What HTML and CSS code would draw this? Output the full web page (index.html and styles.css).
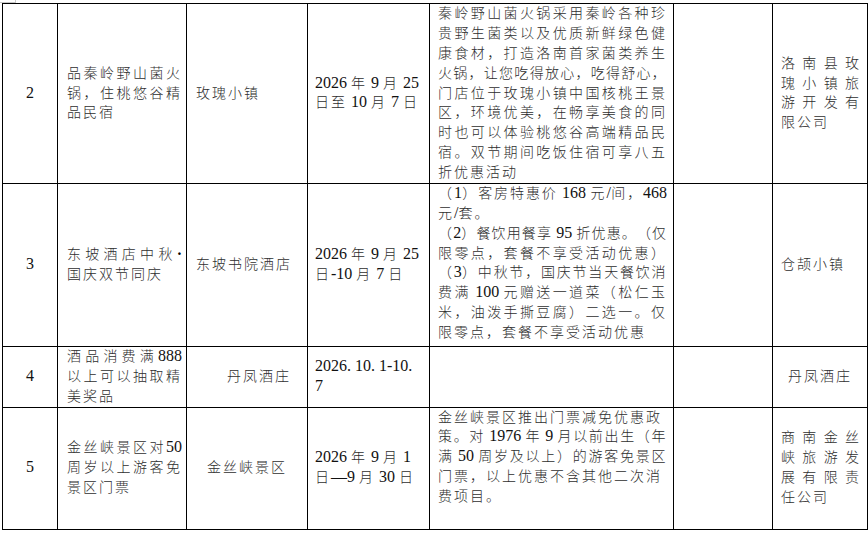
FILE: index.html
```html
<!DOCTYPE html>
<html lang="zh-CN">
<head>
<meta charset="utf-8">
<title>活动表</title>
<link rel="stylesheet" href="styles.css">
</head>
<body>
<div class="corner"></div>
<div class="sheet">
<table class="grid">
  <colgroup>
    <col class="w1"><col class="w2"><col class="w3"><col class="w4"><col class="w5"><col class="w6"><col class="w7">
  </colgroup>
  <tr class="r2">
    <td class="num"><span class="n">2</span></td>
    <td class="name">
      <span class="ln j">品秦岭野山菌火</span>
      <span class="ln j">锅，住桃悠谷精</span>
      <span class="ln">品民宿</span>
    </td>
    <td class="place">玫瑰小镇</td>
    <td class="date">
      <span class="ln"><span class="n">2026 </span>年<span class="n"> 9 </span>月<span class="n"> 25</span></span>
      <span class="ln">日至<span class="n"> 10 </span>月<span class="n"> 7 </span>日</span>
    </td>
    <td class="desc">
      <span class="ln j">秦岭野山菌火锅采用秦岭各种珍</span>
      <span class="ln j">贵野生菌类以及优质新鲜绿色健</span>
      <span class="ln j">康食材，打造洛南首家菌类养生</span>
      <span class="ln j t2">火锅，让您吃得放心，吃得舒心，</span>
      <span class="ln j">门店位于玫瑰小镇中国核桃王景</span>
      <span class="ln j">区，环境优美，在畅享美食的同</span>
      <span class="ln j">时也可以体验桃悠谷高端精品民</span>
      <span class="ln j">宿。双节期间吃饭住宿可享八五</span>
      <span class="ln">折优惠活动</span>
    </td>
    <td class="empty"></td>
    <td class="org">
      <span class="ln j">洛南县玫</span>
      <span class="ln j">瑰小镇旅</span>
      <span class="ln j">游开发有</span>
      <span class="ln">限公司</span>
    </td>
  </tr>
  <tr class="r3">
    <td class="num"><span class="n">3</span></td>
    <td class="name">
      <span class="ln j">东坡酒店中秋<span class="n dot">·</span></span>
      <span class="ln">国庆双节同庆</span>
    </td>
    <td class="place">东坡书院酒店</td>
    <td class="date">
      <span class="ln"><span class="n">2026 </span>年<span class="n"> 9 </span>月<span class="n"> 25</span></span>
      <span class="ln">日<span class="n">-10 </span>月<span class="n"> 7 </span>日</span>
    </td>
    <td class="desc">
      <span class="ln j t1">（<span class="n">1</span>）客房特惠价<span class="n"> 168 </span>元<span class="n">/</span>间，<span class="n">468</span></span>
      <span class="ln">元<span class="n">/</span>套。</span>
      <span class="ln j t3">（<span class="n">2</span>）餐饮用餐享<span class="n"> 95 </span>折优惠。（仅</span>
      <span class="ln j">限零点，套餐不享受活动优惠）</span>
      <span class="ln j t1">（<span class="n">3</span>）中秋节，国庆节当天餐饮消</span>
      <span class="ln j">费满<span class="n"> 100 </span>元赠送一道菜（松仁玉</span>
      <span class="ln j">米，油泼手撕豆腐）二选一。仅</span>
      <span class="ln">限零点，套餐不享受活动优惠</span>
    </td>
    <td class="empty"></td>
    <td class="org">仓颉小镇</td>
  </tr>
  <tr class="r4">
    <td class="num"><span class="n">4</span></td>
    <td class="name">
      <span class="ln j">酒品消费满<span class="n">888</span></span>
      <span class="ln j">以上可以抽取精</span>
      <span class="ln">美奖品</span>
    </td>
    <td class="place place-right">丹凤酒庄</td>
    <td class="date">
      <span class="ln"><span class="n">2026. 10. 1-10.</span></span>
      <span class="ln"><span class="n">7</span></span>
    </td>
    <td class="desc"></td>
    <td class="empty"></td>
    <td class="org org-center">丹凤酒庄</td>
  </tr>
  <tr class="r5">
    <td class="num"><span class="n">5</span></td>
    <td class="name">
      <span class="ln j">金丝峡景区对<span class="n">50</span></span>
      <span class="ln j">周岁以上游客免</span>
      <span class="ln">景区门票</span>
    </td>
    <td class="place place-center">金丝峡景区</td>
    <td class="date">
      <span class="ln"><span class="n">2026 </span>年<span class="n"> 9 </span>月<span class="n"> 1</span></span>
      <span class="ln">日<span class="n">—9 </span>月<span class="n"> 30 </span>日</span>
    </td>
    <td class="desc">
      <span class="ln">金丝峡景区推出门票减免优惠政</span>
      <span class="ln j t1">策。对<span class="n"> 1976 </span>年<span class="n"> 9 </span>月以前出生（年</span>
      <span class="ln j t1">满<span class="n"> 50 </span>周岁及以上）的游客免景区</span>
      <span class="ln">门票，以上优惠不含其他二次消</span>
      <span class="ln">费项目。</span>
    </td>
    <td class="empty"></td>
    <td class="org">
      <span class="ln j">商南金丝</span>
      <span class="ln j">峡旅游发</span>
      <span class="ln j">展有限责</span>
      <span class="ln">任公司</span>
    </td>
  </tr>
</table>
</div>
</body>
</html>
```

FILE: styles.css
```css
html, body {
  margin: 0;
  padding: 0;
  background: #ffffff;
}

.corner {
  position: absolute;
  left: 0;
  top: 0;
  width: 15px;
  height: 2px;
  border-right: 1px solid #c8c8c8;
  border-bottom: 1px solid #c8c8c8;
}

.sheet {
  padding: 3px 0 0 2px;
}

.grid {
  border-collapse: collapse;
  table-layout: fixed;
  width: 865px;
  font-family: "Liberation Serif", "Noto Sans CJK SC", serif;
  font-size: 14px;
  font-weight: 300;
  letter-spacing: 2px;
  color: #2e2e2e;
  text-spacing-trim: space-all;
  text-autospace: no-autospace;
}

.w1 { width: 55px; }
.w2 { width: 129px; }
.w3 { width: 121px; }
.w4 { width: 122px; }
.w5 { width: 244px; }
.w6 { width: 99px; }
.w7 { width: 95px; }

.r2 { height: 179px; }
.r3 { height: 163px; }
.r4 { height: 60px; }
.r5 { height: 122px; }

.grid td {
  border: 1px solid #000000;
  padding: 0;
  vertical-align: middle;
  line-height: 19.875px;
  text-align: left;
}

.ln {
  display: block;
  height: 19.875px;
}

.j {
  text-align: justify;
  text-align-last: justify;
}

.t1 { letter-spacing: 1.5px; }
.t2 { letter-spacing: 1.2px; }
.t3 { letter-spacing: 1px; }

.n {
  font-size: 16px;
  font-weight: 400;
  line-height: 14px;
  letter-spacing: 0;
  color: #111111;
}

.dot {
  font-weight: 700;
  color: #000000;
}

.grid td.num {
  text-align: center;
}

.grid td.name {
  padding: 0 4px 0 9px;
}

.grid td.place {
  padding: 0 8px 0 9px;
}

.grid td.place-right {
  text-align: right;
  padding-right: 16px;
}

.grid td.place-center {
  text-align: center;
  padding: 0 4px;
}

.grid td.date {
  padding: 0 8px 0 7px;
}

.grid td.desc {
  vertical-align: top;
  padding: 0 6px 0 8px;
}

.grid td.org {
  padding: 0 6px 0 8px;
}

.grid td.org-center {
  text-align: center;
  padding: 0 2px;
}
```
